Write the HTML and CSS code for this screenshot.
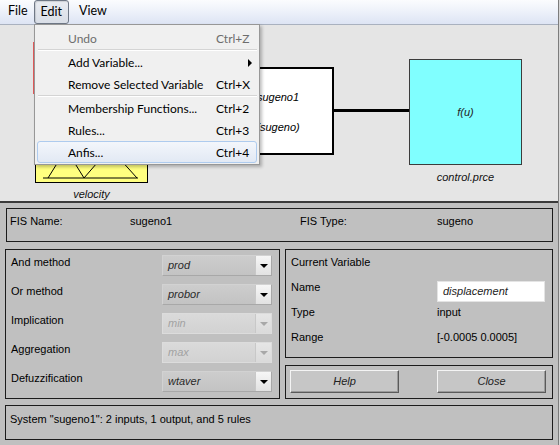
FILE: index.html
```html
<!DOCTYPE html>
<html>
<head>
<meta charset="utf-8">
<link rel="stylesheet" href="styles.css">
</head>
<body>
<div class="app">
  <div class="menubar">
    <span class="mb mb-file">File</span>
    <span class="mb mb-edit">Edit</span>
    <span class="mb mb-view">View</span>
  </div>
  <div class="diagram">
    <div class="node sel"></div>
    <div class="node input">
      <svg class="mf" width="113" height="40" viewBox="0 0 113 40">
        <path d="M8 35 H103" stroke="#000" stroke-width="1" fill="none"/>
        <path d="M13 35 L31 6 L49 35" stroke="#000" stroke-width="1" fill="none"/>
        <path d="M49 35 L75 5 L102 35" stroke="#000" stroke-width="1" fill="none"/>
      </svg>
    </div>
    <div class="nlabel lbl-vel">velocity</div>
    <div class="node fis">
      <div class="fis-l1">sugeno1</div>
      <div class="fis-l2">(sugeno)</div>
    </div>
    <div class="wire"></div>
    <div class="node out"><span>f(u)</span></div>
    <div class="nlabel lbl-out">control.prce</div>

    <div class="menu">
      <div class="mi disabled"><span class="ml">Undo</span><span class="sc">Ctrl+Z</span></div>
      <div class="sep"></div>
      <div class="mi"><span class="ml">Add Variable...</span><span class="sub"></span></div>
      <div class="mi"><span class="ml">Remove Selected Variable</span><span class="sc">Ctrl+X</span></div>
      <div class="sep"></div>
      <div class="mi"><span class="ml">Membership Functions...</span><span class="sc">Ctrl+2</span></div>
      <div class="mi"><span class="ml">Rules...</span><span class="sc">Ctrl+3</span></div>
      <div class="mi hover"><span class="ml">Anfis...</span><span class="sc">Ctrl+4</span></div>
    </div>
  </div>

  <div class="lower">
    <div class="box fisbox">
      <span>FIS Name:</span><span>sugeno1</span><span>FIS Type:</span><span>sugeno</span>
    </div>
    <div class="mid">
      <div class="box methods">
        <span class="lab">And method</span>
        <div class="dd"><span class="ddt">prod</span><span class="ddb"><i></i></span></div>
        <span class="lab">Or method</span>
        <div class="dd"><span class="ddt">probor</span><span class="ddb"><i></i></span></div>
        <span class="lab">Implication</span>
        <div class="dd off"><span class="ddt">min</span><span class="ddb"><i></i></span></div>
        <span class="lab">Aggregation</span>
        <div class="dd off"><span class="ddt">max</span><span class="ddb"><i></i></span></div>
        <span class="lab">Defuzzification</span>
        <div class="dd"><span class="ddt">wtaver</span><span class="ddb"><i></i></span></div>
      </div>
      <div class="rcol">
        <div class="box curvar">
          <span class="lab full">Current Variable</span>
          <span class="lab">Name</span><div class="inp">displacement</div>
          <span class="lab">Type</span><span class="lab">input</span>
          <span class="lab">Range</span><span class="lab">[-0.0005 0.0005]</span>
        </div>
        <div class="box btns">
          <div class="btn">Help</div>
          <div class="btn">Close</div>
        </div>
      </div>
    </div>
    <div class="box status">System "sugeno1": 2 inputs, 1 output, and 5 rules</div>
  </div>
</div>
</body>
</html>
```
FILE: styles.css
```css
* { box-sizing: border-box; }
html, body { margin: 0; padding: 0; }
body { background: #d8d8d8; width: 560px; height: 445px; overflow: hidden; }
.app {
  width: 559px; height: 445px;
  border-right: 1px solid #7c7c7c;
  background: #c0c0c0;
  font-family: "Liberation Sans", Arial, sans-serif;
  font-size: 11px;
  color: #000;
}
.menubar {
  height: 25px;
  border-bottom: 1px solid #a9b1bf;
  background: linear-gradient(to bottom, #fbfcfe 0%, #eef2fa 45%, #dde4f4 100%);
  display: flex;
  align-items: center;
  font-family: Lato, "Open Sans", sans-serif;
  font-size: 12.5px;
  color: #000;
}
.mb { height: 24px; line-height: 22px; }
.mb-file { margin-left: 8px; }
.mb-edit {
  margin-left: 6px;
  padding: 0 6px;
  border: 1px solid #6f7886;
  border-radius: 3px;
  background: linear-gradient(to bottom, #e9ecf2, #d9dee7);
  box-shadow: inset 1px 1px 1px rgba(0,0,0,0.12);
}
.mb-view { margin-left: 10px; }

.diagram {
  position: relative;
  height: 178px;
  background: #e5e5e5;
  border-bottom: 2px solid #3a3a3a;
}
.node { position: absolute; }
.sel { left: 33px; top: 17px; width: 117px; height: 52px; border: 1px solid #e05a5a; }
.input { left: 35px; top: 117px; width: 113px; height: 41px; background: #ffff80; border: 1px solid #000; }
.mf { display: block; position: absolute; left: -1px; top: 0; }
.nlabel { position: absolute; font-style: italic; line-height: 14px; text-align: center; color: #111; }
.lbl-vel { left: 35px; width: 113px; top: 162px; }
.fis {
  left: 222px; top: 42px; width: 112px; height: 88px;
  background: #fff; border: 2px solid #000;
  font-style: italic; text-align: center; line-height: 14px;
  padding-top: 21px;
}
.fis-l2 { margin-top: 16px; }
.wire { position: absolute; left: 334px; top: 84px; width: 75px; height: 3px; background: #000; }
.out {
  left: 409px; top: 34px; width: 113px; height: 106px;
  background: #80ffff; border: 1px solid #3c3c3c;
  display: flex; align-items: center; justify-content: center;
  font-style: italic; color: #222;
}
.lbl-out { left: 409px; width: 113px; top: 145px; }

.menu {
  position: absolute; left: 34px; top: -1px;
  width: 226px; height: 141px;
  background: #f0f0f0;
  border: 1px solid #979797;
  box-shadow: 2px 2px 3px rgba(0,0,0,0.25);
  padding: 2px 2px 1px 2px;
  font-family: Lato, "Open Sans", sans-serif;
  font-size: 12px;
  color: #000;
}
.mi {
  height: 22px;
  display: grid;
  grid-template-columns: 148px auto;
  align-items: center;
  padding-left: 30px;
  border: 1px solid transparent;
  position: relative;
}
.mi.disabled { color: #6d6d6d; }
.mi.hover {
  border-color: #aecbee;
  border-radius: 3px;
  background: linear-gradient(to bottom, #f3f6fb, #e2e9f4);
}
.sep { height: 2px; margin: 0 0 0 1px; border-top: 1px solid #d4d4d4; border-bottom: 1px solid #fff; }
.sub {
  position: absolute; left: 210px; top: 7px;
  width: 0; height: 0;
  border-left: 4px solid #000;
  border-top: 4px solid transparent;
  border-bottom: 4px solid transparent;
}

.lower { padding: 5px 0 0 5px; }
.box { border: 1px solid #1c1c1c; }
.fisbox {
  margin-left: 1px;
  width: 547px; height: 34px;
  padding: 5px 0 0 3px;
  display: grid;
  grid-template-columns: 120px 170px 137px auto;
  line-height: 14px;
}
.mid {
  margin-top: 7px;
  display: grid;
  grid-template-columns: 275px 268px;
  column-gap: 5px;
}
.lab { line-height: 14px; }
.methods {
  height: 150px;
  padding: 5px 0 0 5px;
  display: grid;
  grid-template-columns: 151px 110px;
  grid-auto-rows: 21px;
  row-gap: 8px;
  align-items: start;
}
.dd {
  height: 21px;
  display: flex;
  background: linear-gradient(to bottom, #cdcdcd, #c3c3c3);
  border: 1px solid #d2d2d2;
  border-right-color: #a8a8a8;
  border-bottom-color: #a8a8a8;
}
.ddt { flex: 1; padding-left: 5px; line-height: 19px; font-style: italic; color: #2a2a2a; }
.ddb {
  width: 16px; height: 19px;
  background: linear-gradient(to bottom, #f6f6f6, #e2e2e2);
  border-left: 1px solid #c8c8c8;
  display: flex; align-items: center; justify-content: center;
}
.ddb i {
  width: 0; height: 0;
  border-top: 4px solid #000;
  border-left: 4px solid transparent;
  border-right: 4px solid transparent;
}
.dd.off { background: linear-gradient(to bottom, #dadada, #d2d2d2); border-color: #dcdcdc; }
.dd.off .ddt { color: #a2a2a2; }
.dd.off .ddb { background: linear-gradient(to bottom, #e6e6e6, #dadada); }
.dd.off .ddb i { border-top-color: #a8a8a8; }

.rcol { display: flex; flex-direction: column; row-gap: 7px; }
.curvar {
  height: 109px;
  padding: 5px 0 0 5px;
  display: grid;
  grid-template-columns: 146px 108px;
  grid-template-rows: 25px 25px 25px 25px;
  align-items: start;
}
.full { grid-column: 1 / 3; }
.inp {
  margin-top: 1px;
  height: 21px;
  background: #fff;
  border: 1px solid #e4e4e4;
  font-style: italic;
  line-height: 19px;
  padding-left: 5px;
  color: #222;
}
.btns {
  height: 34px;
  padding: 4px 0 0 4px;
  display: grid;
  grid-template-columns: 109px 109px;
  column-gap: 38px;
}
.btn {
  height: 23px;
  background: #c6c6c6;
  border: 1px solid;
  border-color: #f4f4f4 #5a5a5a #5a5a5a #f4f4f4;
  box-shadow: inset -1px -1px 0 #9a9a9a;
  text-align: center;
  line-height: 21px;
  font-style: italic;
  color: #222;
}
.status {
  margin-top: 6px;
  width: 548px; height: 35px;
  padding: 6px 0 0 4px;
  line-height: 14px;
}
```
